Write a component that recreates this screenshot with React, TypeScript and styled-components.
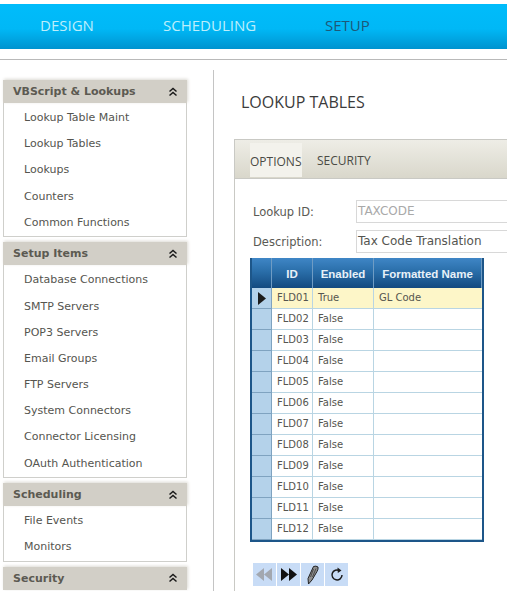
import React from 'react';
import styled, { createGlobalStyle } from 'styled-components';

const GlobalStyle = createGlobalStyle`
  html, body {
    margin: 0;
    padding: 0;
    background: #fff;
    overflow: hidden;
  }
`

const Page = styled.div`
  width: 507px;
  height: 591px;
  overflow: hidden;
  padding-top: 4px;
  box-sizing: border-box;
  font-family: "DejaVu Sans", sans-serif;
`

const TopBar = styled.div`
  height: 45px;
  display: flex;
  align-items: center;
  padding: 0 0 4px 40px;
  box-sizing: border-box;
  background: linear-gradient(#00bcfb 0%, #00b8f6 55%, #0093cf 100%);
`

const NavLink = styled.div<{ $active?: boolean; $width: number }>`
  width: ${p => p.$width}px;
  font-family: "Open Sans", sans-serif;
  font-size: 15px;
  color: ${p => (p.$active ? '#1d5878' : '#bdeefb')};
`

const Rule = styled.div`
  height: 1px;
  margin-top: 10px;
  background: #b9b9b9;
`

const Body = styled.div`
  display: flex;
  padding-top: 10px;
`

const Sidebar = styled.div`
  width: 184px;
  margin-left: 3px;
  padding-top: 10px;
  display: flex;
  flex-direction: column;
  gap: 5.4px;
`

const Section = styled.div``

const SectionHead = styled.div`
  height: 23px;
  display: flex;
  align-items: center;
  justify-content: space-between;
  padding: 0 9px 0 10px;
  background: #d2cfc7;
  box-shadow: 1px -1px 3px #dcdad4;
  font-size: 11px;
  font-weight: 700;
  color: #5c5a52;
`

const SectionList = styled.div`
  border: 1px solid #cfcfcb;
  border-top: none;
  padding-top: 2px;
`

const SectionItem = styled.div`
  height: 26.2px;
  line-height: 26.2px;
  padding-left: 20px;
  font-size: 11px;
  color: #55554f;
`

const Main = styled.div`
  flex: 1;
  min-width: 0;
  margin-left: 26px;
  border-left: 1px solid #c4c4c4;
  padding: 22px 0 0 20px;
  height: 522px;
`

const Title = styled.h1`
  margin: 0 0 27px 7px;
  font-family: "Open Sans", sans-serif;
  font-size: 16px;
  line-height: 20px;
  font-weight: 400;
  color: #3b3b3b;
`

const Panel = styled.div`
  width: 300px;
  border: 1px solid #c9c9c4;
  border-right: none;
`

const TabBar = styled.div`
  height: 39px;
  padding: 3px 0 0 15px;
  box-sizing: border-box;
  display: flex;
  gap: 15px;
  background: linear-gradient(#eeede6, #d9d7cb);
  border-bottom: 1px solid #c9c9c4;
`

const Tab = styled.div<{ $active?: boolean }>`
  height: 34px;
  display: flex;
  align-items: center;
  font-family: "Open Sans", sans-serif;
  font-size: 12px;
  color: #4a4a44;
  ${p => p.$active && 'background: #f3f2ec; padding-top: 3px; box-sizing: border-box; width: 52px;'}
`

const PanelBody = styled.div`
  padding: 21px 0 21px 15px;
`

const FormRow = styled.div`
  height: 23px;
  margin-bottom: 7px;
  display: flex;
  align-items: center;
  &:last-of-type {
    margin-bottom: 6px;
  }
`

const FieldLabel = styled.div`
  width: 103px;
  padding-left: 3px;
  font-size: 11.5px;
  color: #5a5a54;
`

const Field = styled.div<{ $muted?: boolean }>`
  flex: 1;
  height: 21px;
  line-height: 21px;
  padding-left: 1px;
  border: 1px solid #d8d8d8;
  border-right: none;
  font-size: 12px;
  white-space: nowrap;
  color: ${p => (p.$muted ? '#a9a9a9' : '#55554f')};
`

const Grid = styled.div`
  width: 234px;
  margin-top: -2px;
  border: 2px solid #1d5689;
  border-top: none;
  box-sizing: border-box;
  display: grid;
  grid-template-columns: 20px 41px 61px 1fr;
`

const HeadCell = styled.div`
  height: 30px;
  padding-top: 2px;
  display: flex;
  align-items: center;
  justify-content: center;
  box-sizing: border-box;
  background: linear-gradient(#3f86c6 0%, #2a6ea9 45%, #134a80 100%);
  border-right: 1px solid #6f9cc4;
  font-family: "Liberation Sans", sans-serif;
  font-size: 11.5px;
  font-weight: 700;
  color: #e8f1f8;
  &:last-child {
    border-right: none;
  }
`

const RowMark = styled.div`
  height: 21px;
  display: flex;
  align-items: center;
  justify-content: center;
  box-sizing: border-box;
  background: #b4d2ea;
  border-bottom: 1px solid #7fa3c0;
  border-right: 1px solid #7fa3c0;
`

const Cell = styled.div<{ $selected?: boolean }>`
  height: 21px;
  line-height: 20px;
  padding-left: 5px;
  box-sizing: border-box;
  font-size: 10px;
  white-space: nowrap;
  color: #55554f;
  background: ${p => (p.$selected ? '#fdf6c8' : '#fff')};
  border-bottom: 1px solid #b9d5e3;
  border-right: 1px solid #b9d5e3;
  &:nth-child(4n) {
    border-right: none;
  }
`

const Toolbar = styled.div`
  display: flex;
  gap: 1px;
  margin: 21px 0 0 3px;
`

const ToolButton = styled.div`
  width: 23px;
  height: 23px;
  display: flex;
  align-items: center;
  justify-content: center;
  background: #c8dcf6;
`

const Chevrons = () => (
  <svg width="10" height="10" viewBox="0 0 10 10" fill="none" stroke="#1a1a1a" strokeWidth="1.5">
    <path d="M1.5 4.5 5 1.5 8.5 4.5M1.5 8.5 5 5.5 8.5 8.5" />
  </svg>
)

const Arrows = ({ color, back }: { color: string; back?: boolean }) => (
  <svg width="17" height="13" viewBox="0 0 17 13" fill={color}>
    {back
      ? <path d="M8 0v13L0 6.5zM16 0v13L8 6.5z" />
      : <path d="M1 0v13l8-6.5zM9 0v13l8-6.5z" />}
  </svg>
)

const Pencil = () => (
  <svg width="12" height="20" viewBox="0 0 12 20">
    <path d="M6.5 1.5Q9 0.5 11 2Q11.5 4 10 6.5L5 15L1.5 19L1 13.5Z" fill="#8f8f8f" stroke="#222" strokeWidth="1" strokeLinejoin="round" />
    <path d="M6.5 4 3.5 12M9 3.5 5.5 12" stroke="#3a3a3a" strokeWidth="0.8" fill="none" />
  </svg>
)

const Refresh = () => (
  <svg width="14" height="15" viewBox="0 0 14 15" fill="none">
    <path d="M9.5 3.6A5 5 0 1 0 12 8" stroke="#1c1c1c" strokeWidth="1.5" />
    <path d="M7.5 0.6 11.5 3.4 7.8 6z" fill="#1c1c1c" />
  </svg>
)

const Pointer = () => (
  <svg width="8" height="13" viewBox="0 0 8 13" fill="#1c1c1c">
    <path d="M0 0v13l8-6.5z" />
  </svg>
)

const sections = [
  { title: 'VBScript & Lookups', items: ['Lookup Table Maint', 'Lookup Tables', 'Lookups', 'Counters', 'Common Functions'] },
  {
    title: 'Setup Items',
    items: [
      'Database Connections',
      'SMTP Servers',
      'POP3 Servers',
      'Email Groups',
      'FTP Servers',
      'System Connectors',
      'Connector Licensing',
      'OAuth Authentication',
    ],
  },
  { title: 'Scheduling', items: ['File Events', 'Monitors'] },
  { title: 'Security', items: [] as string[] },
]

const rows = Array.from({ length: 12 }, (_, index) => ({
  id: `FLD${String(index + 1).padStart(2, '0')}`,
  enabled: index === 0 ? 'True' : 'False',
  name: index === 0 ? 'GL Code' : '',
}))

const App: React.FC = () => (
  <Page>
    <GlobalStyle />
    <TopBar>
      <NavLink $width={123}>DESIGN</NavLink>
      <NavLink $width={162}>SCHEDULING</NavLink>
      <NavLink $width={80} $active>SETUP</NavLink>
    </TopBar>
    <Rule />
    <Body>
      <Sidebar>
        {sections.map(section => (
          <Section key={section.title}>
            <SectionHead>
              {section.title}
              <Chevrons />
            </SectionHead>
            {section.items.length > 0 && (
              <SectionList>
                {section.items.map(item => <SectionItem key={item}>{item}</SectionItem>)}
              </SectionList>
            )}
          </Section>
        ))}
      </Sidebar>
      <Main>
        <Title>LOOKUP TABLES</Title>
        <Panel>
          <TabBar>
            <Tab $active>OPTIONS</Tab>
            <Tab>SECURITY</Tab>
          </TabBar>
          <PanelBody>
            <FormRow>
              <FieldLabel>Lookup ID:</FieldLabel>
              <Field $muted>TAXCODE</Field>
            </FormRow>
            <FormRow>
              <FieldLabel>Description:</FieldLabel>
              <Field>Tax Code Translation</Field>
            </FormRow>
            <Grid>
              <HeadCell />
              <HeadCell>ID</HeadCell>
              <HeadCell>Enabled</HeadCell>
              <HeadCell>Formatted Name</HeadCell>
              {rows.map((row, index) => (
                <React.Fragment key={row.id}>
                  <RowMark>{index === 0 && <Pointer />}</RowMark>
                  <Cell $selected={index === 0}>{row.id}</Cell>
                  <Cell $selected={index === 0}>{row.enabled}</Cell>
                  <Cell $selected={index === 0}>{row.name}</Cell>
                </React.Fragment>
              ))}
            </Grid>
            <Toolbar>
              <ToolButton><Arrows color="#a3a8b0" back /></ToolButton>
              <ToolButton><Arrows color="#111" /></ToolButton>
              <ToolButton><Pencil /></ToolButton>
              <ToolButton><Refresh /></ToolButton>
            </Toolbar>
          </PanelBody>
        </Panel>
      </Main>
    </Body>
  </Page>
)

export default App
